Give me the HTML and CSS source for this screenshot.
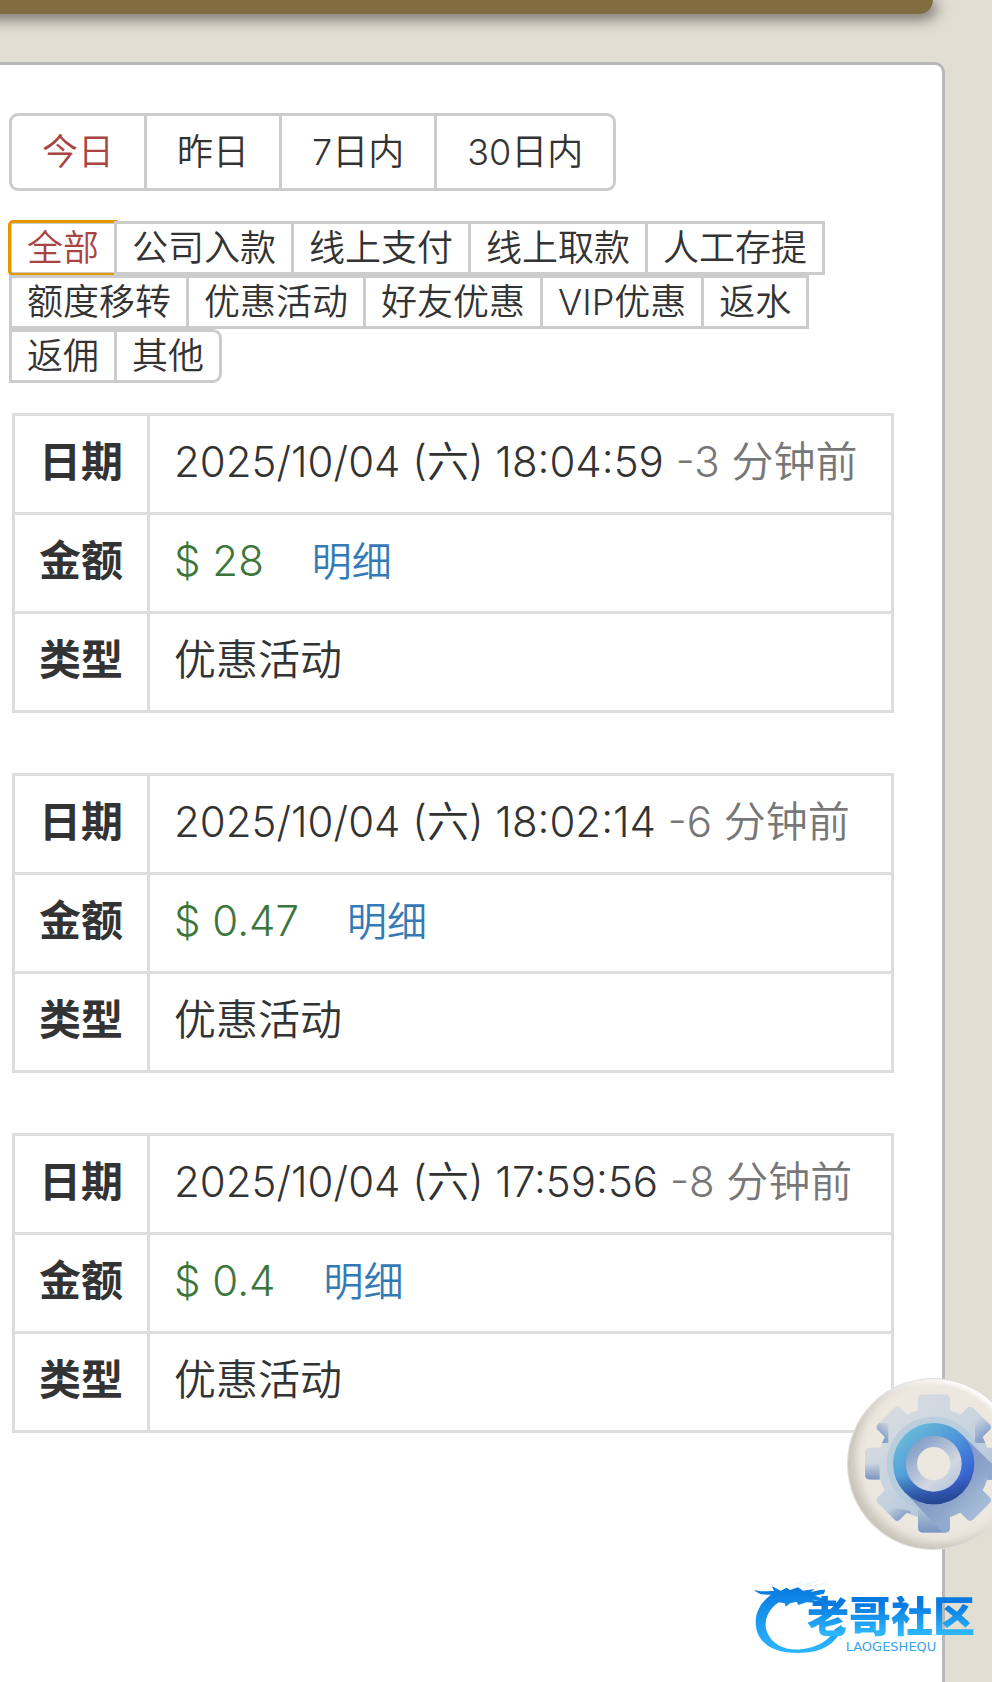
FILE: index.html
```html
<!DOCTYPE html>
<html lang="zh-CN">
<head>
<meta charset="utf-8">
<meta name="viewport" content="width=device-width, initial-scale=1">
<title>交易记录</title>
<link rel="stylesheet" href="styles.css">
</head>
<body>
<div class="page">
  <header class="banner"></header>
  <main class="panel">
    <div class="range" role="group" aria-label="日期范围">
      <button type="button" class="btn btn-lg active" aria-pressed="true">今日</button>
      <button type="button" class="btn btn-lg">昨日</button>
      <button type="button" class="btn btn-lg">7日内</button>
      <button type="button" class="btn btn-lg">30日内</button>
    </div>
    <div class="types" role="group" aria-label="交易类型">
      <button type="button" class="btn active focused" aria-pressed="true">全部</button>
      <button type="button" class="btn">公司入款</button>
      <button type="button" class="btn">线上支付</button>
      <button type="button" class="btn">线上取款</button>
      <button type="button" class="btn">人工存提</button>
      <button type="button" class="btn row-start">额度移转</button>
      <button type="button" class="btn">优惠活动</button>
      <button type="button" class="btn">好友优惠</button>
      <button type="button" class="btn">VIP优惠</button>
      <button type="button" class="btn">返水</button>
      <button type="button" class="btn row-start">返佣</button>
      <button type="button" class="btn">其他</button>
    </div>
    <div class="records">
      <table class="record">
        <tr><th scope="row">日期</th><td>2025/10/04 (六) 18:04:59 <span class="ago">-3 分钟前</span></td></tr>
        <tr><th scope="row">金额</th><td><span class="amount">$ 28</span><a class="detail" href="#">明细</a></td></tr>
        <tr><th scope="row">类型</th><td>优惠活动</td></tr>
      </table>
      <table class="record">
        <tr><th scope="row">日期</th><td>2025/10/04 (六) 18:02:14 <span class="ago">-6 分钟前</span></td></tr>
        <tr><th scope="row">金额</th><td><span class="amount">$ 0.47</span><a class="detail" href="#">明细</a></td></tr>
        <tr><th scope="row">类型</th><td>优惠活动</td></tr>
      </table>
      <table class="record">
        <tr><th scope="row">日期</th><td>2025/10/04 (六) 17:59:56 <span class="ago">-8 分钟前</span></td></tr>
        <tr><th scope="row">金额</th><td><span class="amount">$ 0.4</span><a class="detail" href="#">明细</a></td></tr>
        <tr><th scope="row">类型</th><td>优惠活动</td></tr>
      </table>
    </div>
  </main>

  <button type="button" class="settings" aria-label="设置">
    <svg class="gear" viewBox="53 58 510 510" aria-hidden="true">
      <defs>
        <linearGradient id="body" x1="0" y1="0" x2="0.75" y2="1">
          <stop offset="0" stop-color="#dedde1"/><stop offset="0.5" stop-color="#c9d5e0"/><stop offset="1" stop-color="#a3bbd6"/>
        </linearGradient>
        <linearGradient id="ring" x1="0.1" y1="0.15" x2="0.8" y2="0.9">
          <stop offset="0" stop-color="#69bbd8"/><stop offset="0.5" stop-color="#4c94da"/><stop offset="0.85" stop-color="#3b68d8"/><stop offset="1" stop-color="#3458b8"/>
        </linearGradient>
        <linearGradient id="ringdark" x1="0" y1="0" x2="0" y2="1">
          <stop offset="0.65" stop-color="#25458e" stop-opacity="0"/><stop offset="1" stop-color="#25458e"/>
        </linearGradient>
        <linearGradient id="inner" x1="0.15" y1="0.1" x2="0.85" y2="0.9">
          <stop offset="0" stop-color="#7f9bc6"/><stop offset="0.7" stop-color="#d2d8e1"/><stop offset="1" stop-color="#b8c8de"/>
        </linearGradient>
        <linearGradient id="cast" gradientUnits="userSpaceOnUse" x1="340" y1="340" x2="450" y2="450">
          <stop offset="0" stop-color="#8598c4"/><stop offset="0.5" stop-color="#8da4ca"/><stop offset="1" stop-color="#9db7d6" stop-opacity="0.5"/>
        </linearGradient>
        <linearGradient id="edge" x1="0" y1="0" x2="0" y2="1">
          <stop offset="0" stop-color="#7893c2" stop-opacity="0"/><stop offset="1" stop-color="#7893c2"/>
        </linearGradient>
        <linearGradient id="tipleft" gradientUnits="userSpaceOnUse" x1="178" y1="190" x2="150" y2="224">
          <stop offset="0" stop-color="#8ba3cb" stop-opacity="0"/><stop offset="1" stop-color="#8ba3cb"/>
        </linearGradient>
        <linearGradient id="tipright" gradientUnits="userSpaceOnUse" x1="440" y1="180" x2="472" y2="220">
          <stop offset="0" stop-color="#8ba3cb" stop-opacity="0"/><stop offset="1" stop-color="#8ba3cb"/>
        </linearGradient>
        <linearGradient id="tiplow" gradientUnits="userSpaceOnUse" x1="190" y1="440" x2="216" y2="480">
          <stop offset="0" stop-color="#829cc7" stop-opacity="0"/><stop offset="1" stop-color="#829cc7"/>
        </linearGradient>
        <clipPath id="cog">
          <circle cx="310" cy="312" r="167"/>
          <rect x="263" y="104" width="96" height="415" rx="14"/>
          <rect x="104" y="264" width="415" height="96" rx="14"/>
          <rect x="263" y="110" width="94" height="404" rx="12" transform="rotate(45 310 312)"/>
          <rect x="263" y="110" width="94" height="404" rx="12" transform="rotate(-45 310 312)"/>
        </clipPath>
      </defs>
      <g clip-path="url(#cog)">
        <rect x="100" y="100" width="425" height="425" fill="url(#body)"/>
        <rect x="100" y="310" width="48" height="50" fill="url(#edge)"/>
        <rect x="472" y="310" width="48" height="50" fill="url(#edge)"/>
        <rect x="263" y="440" width="96" height="80" fill="url(#edge)"/>
        <path d="M130 190h44v60h-44z" fill="url(#tipleft)"/>
        <path d="M434 250v-80h56v80z" fill="url(#tipright)"/>
        <path d="M170 440l70 14v50h-70z" fill="url(#tiplow)"/>
        <circle cx="310" cy="312" r="141" fill="#adcadb" opacity="0.65"/>
        <path d="M396 226L540 366V540H356L224 398z" fill="url(#cast)"/>
      </g>
      <circle cx="310" cy="312" r="122" fill="url(#ring)"/>
      <circle cx="310" cy="312" r="122" fill="url(#ringdark)"/>
      <circle cx="310" cy="312" r="84" fill="url(#inner)"/>
      <circle cx="310" cy="312" r="50" fill="#ece7df"/>
    </svg>
  </button>

  <div class="watermark">
    <svg class="dragon" viewBox="39 28 276 234" aria-hidden="true">
      <defs>
        <linearGradient id="swoosh" x1="0" y1="0" x2="0" y2="1">
          <stop offset="0" stop-color="#0879df"/><stop offset="1" stop-color="#2db7ff"/>
        </linearGradient>
      </defs>
      <path fill="url(#swoosh)" d="M42 63c22 8 38 3 60 4l-6-14 26 13 18-9 10 7 24-8 15 10 35-5-12 9 28-6 16-1-4 12-27 6 26 9-8 8-24-5 10 9-30-1-24 8-5-10-20 5-13 10-3-10-17-3c-34 21-49 60-35 91 18 43 69 60 127 45 41-10 64-31 76-56l20-12c-3 42-46 76-99 82C119 261 60 234 49 180c-8-39 9-77 44-102-22 1-38 0-51-15z"/>
      <path fill="none" stroke="#b5dcf7" stroke-width="2" opacity=".55" d="M160 48l30-9m-10 13l54-16m-36 18l58-10"/>
    </svg>
    <div class="brand">
      <span class="brand-name">老哥社区</span>
      <span class="brand-latin">LAOGESHEQU</span>
    </div>
  </div>
</div>
</body>
</html>
```
FILE: styles.css
```css
* {
  box-sizing: border-box;
}

body {
  margin: 0;
  background: #e1dfd3;
  color: #333;
  font-family: Inter, "Noto Sans CJK SC", sans-serif;
  font-weight: 350;
}

.page {
  position: relative;
  display: flex;
  flex-direction: column;
  min-height: 100vh;
  overflow: hidden;
}

.banner {
  height: 14px;
  margin: 0 59px 48px -20px;
  background: #826d41;
  border-radius: 0 0 16px 0;
  box-shadow: 3px 4px 14px 2px rgba(70, 65, 65, 0.65);
}

.panel {
  flex: 1;
  margin-right: 47px;
  padding: 48px 48px 60px 9px;
  background: #fff;
  border: 3px solid #b9b9b9;
  border-width: 3px 3px 0 0;
  border-radius: 0 10px 0 0;
}

.range,
.types {
  display: flex;
  flex-wrap: wrap;
  margin-bottom: 30px;
}

.btn {
  position: relative;
  height: 54px;
  margin: 0 0 0 -3px;
  padding: 0 15px;
  border: 3px solid #ccc;
  background: #fff;
  color: #333;
  font: inherit;
  font-size: 36px;
  line-height: 48px;
  white-space: nowrap;
}

.btn-lg {
  height: 78px;
  padding: 0 30px;
  line-height: 72px;
}

.btn:first-child {
  margin-left: 0;
  border-radius: 9px 0 0 9px;
}

.btn:last-child {
  border-radius: 0 9px 9px 0;
}

.btn.row-start {
  margin-left: 0;
}

.btn.active {
  color: #a94442;
}

.btn.focused {
  border-radius: 4px 0 0 4px;
  outline: 3px solid #e59700;
  outline-offset: -2px;
}

.records {
  display: grid;
  gap: 60px;
  padding-left: 3px;
}

.record {
  width: 100%;
  border-collapse: collapse;
  font-size: 42px;
  line-height: 60px;
}

.record th,
.record td {
  height: 99px;
  padding: 16px 24px 20px;
  border: 3px solid #ddd;
  text-align: left;
  white-space: nowrap;
}

.record th {
  width: 135px;
  font-weight: 700;
}

.ago {
  color: #777;
}

.amount {
  color: #3c763d;
}

.detail {
  margin-left: 48px;
  color: #337ab7;
  font-size: 40px;
  line-height: 40px;
  text-decoration: none;
}

.settings {
  position: absolute;
  top: 1379px;
  right: -26px;
  width: 170px;
  height: 170px;
  padding: 0;
  border: 0;
  border-radius: 50%;
  background: #ece7df;
  box-shadow: inset 7px -5px 10px #c9c3ba, inset -3px 3px 4px #fff, 0 0 0 1px #dedede;
}

.gear {
  display: block;
  width: 100%;
}

.watermark {
  position: absolute;
  right: 17px;
  bottom: 24px;
  width: 222px;
  height: 80px;
}

.dragon {
  display: block;
  width: 92px;
}

.brand {
  position: absolute;
  top: 18px;
  right: 0;
  display: flex;
  flex-direction: column;
  align-items: center;
}

.brand-name {
  background: linear-gradient(#0879df 20%, #2db7ff 90%);
  background-clip: text;
  color: transparent;
  font-size: 42px;
  font-weight: 900;
  line-height: 42px;
}

.brand-latin {
  padding-top: 2px;
  color: #3aa3ee;
  font-family: "DejaVu Sans", sans-serif;
  font-size: 13px;
  font-weight: 400;
  line-height: 14px;
}
```
